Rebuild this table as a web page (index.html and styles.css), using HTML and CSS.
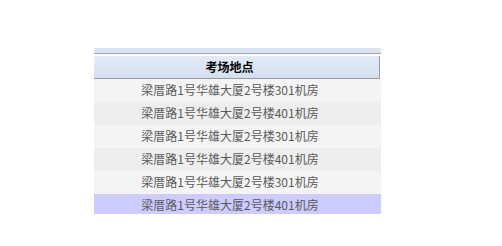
FILE: index.html
```html
<!DOCTYPE html>
<html lang="zh-CN">
<head>
  <meta charset="UTF-8" />
  <title>考场地点</title>
  <link rel="stylesheet" href="styles.css">
</head>
<body>
  <div class="panel">
    <div class="panel-top"></div>
    <div class="grid-head">考场地点</div>
    <div class="grid-body">
      <div class="row odd">梁厝路1号华雄大厦2号楼301机房</div>
      <div class="row even">梁厝路1号华雄大厦2号楼401机房</div>
      <div class="row odd">梁厝路1号华雄大厦2号楼301机房</div>
      <div class="row even">梁厝路1号华雄大厦2号楼401机房</div>
      <div class="row odd">梁厝路1号华雄大厦2号楼301机房</div>
      <div class="row selected">梁厝路1号华雄大厦2号楼401机房</div>
    </div>
  </div>
</body>
</html>
```

FILE: styles.css
```css
body { margin: 0; background: #fff; font-family: "Noto Sans CJK SC", "Liberation Sans", sans-serif; font-size: 12px; }
.panel { width: 287px; height: 166px; margin: 48px 0 0 94px; overflow: hidden; }
.panel-top { height: 5px; background: #dbe5f3; border-bottom: 1px solid #a5a5a5; }
.grid-head {
  height: 22px; line-height: 22px; margin-top: 2px; margin-right: 1px;
  background: linear-gradient(#e3ebf7, #d3dff0);
  border-right: 1px solid #9a9a9a; border-bottom: 1px solid #9a9a9a;
  text-align: center; padding-right: 14px; font-weight: bold; color: #000;
}
.row { height: 23px; line-height: 22px; text-align: center; padding-right: 15px; color: #5a5a5a; }
.row.odd { background: #f4f4f4; }
.row.even { background: #eeeeee; }
.row.selected { background: #ccccff; }
```
